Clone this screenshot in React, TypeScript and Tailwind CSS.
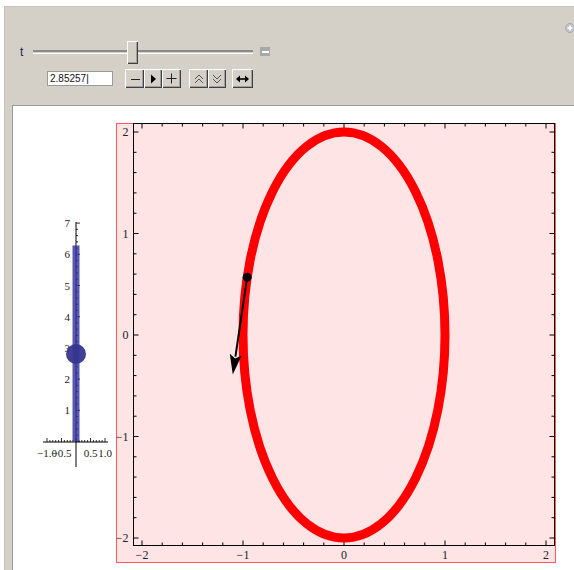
import React from "react";

const T = 2.85257;

// main plot mapping (page pixels)
const X0 = 344;
const XS = 101;
const Y0 = 335;
const YS = 101.5;
const px = (u: number) => X0 + XS * u;
const py = (v: number) => Y0 - YS * v;

// number line mapping
const NY0 = 441.5;
const NYS = 31.2;
const ny = (k: number) => NY0 - NYS * k;

const serif = { fontFamily: "'Liberation Serif', 'Times New Roman', serif" };

function Btn({ w, children }: { w: string; children: React.ReactNode }) {
  return (
    <div
      className={`${w} h-[19px] flex items-center justify-center bg-[#d4d0c8] shadow-[inset_1px_1px_0_#ffffff,inset_-1px_-1px_0_#404040,inset_-2px_-2px_0_#a0a0a0]`}
    >
      {children}
    </div>
  );
}

function Controls() {
  return (
    <div className="relative h-[98px] flex flex-col pt-[33px] pl-[8px]">
      <div className="flex items-center h-[23px]">
        <span
          className="w-[13px] text-[12px] leading-none text-[#1c1c50]"
          style={{ fontFamily: "'Liberation Sans', Arial, sans-serif" }}
        >
          t
        </span>
        <div className="relative w-[220px] h-[4px] bg-[#d4d0c8] border-t-2 border-[#8a8a8a] border-b border-b-white">
          <div className="absolute left-[94px] top-[-11px] w-[11px] h-[23px] bg-[#d4d0c8] shadow-[inset_1px_1px_0_#ffffff,inset_-1px_-1px_0_#404040,inset_-2px_-2px_0_#a0a0a0]" />
        </div>
        <div className="ml-[7px] w-[10px] h-[9px] bg-[#a8a8a8] flex items-center justify-center">
          <div className="w-[7px] h-[2px] bg-white" />
        </div>
      </div>

      <div className="flex items-center h-[19px] mt-[6px]">
        <div
          className="ml-[27px] w-[66px] h-[15px] bg-white border border-[#9a9a9a] flex items-center pl-[2px] text-[10px] leading-none text-[#111]"
          style={{ fontFamily: "'Liberation Sans', Arial, sans-serif" }}
        >
          2.85257|
        </div>
        <div className="ml-[12px] flex">
          <Btn w="w-[19px]">
            <svg width="10" height="10" viewBox="0 0 10 10">
              <line x1="1" y1="5.5" x2="10" y2="5.5" stroke="#222" strokeWidth="1" />
            </svg>
          </Btn>
          <Btn w="w-[18px]">
            <svg width="8" height="10" viewBox="0 0 8 10">
              <polygon points="2,0.5 7,5 2,9.5" fill="#000" />
            </svg>
          </Btn>
          <Btn w="w-[19px]">
            <svg width="11" height="11" viewBox="0 0 11 11">
              <line x1="0.5" y1="5.5" x2="10.5" y2="5.5" stroke="#222" strokeWidth="1" />
              <line x1="5.5" y1="0.5" x2="5.5" y2="10.5" stroke="#222" strokeWidth="1" />
            </svg>
          </Btn>
        </div>
        <div className="ml-[8px] flex">
          <Btn w="w-[19px]">
            <svg width="10" height="10" viewBox="0 0 10 10" fill="none" stroke="#555" strokeWidth="1">
              <polyline points="1,5 5,1 9,5" />
              <polyline points="1,9 5,5 9,9" />
            </svg>
          </Btn>
          <Btn w="w-[18px]">
            <svg width="10" height="10" viewBox="0 0 10 10" fill="none" stroke="#555" strokeWidth="1">
              <polyline points="1,1 5,5 9,1" />
              <polyline points="1,5 5,9 9,5" />
            </svg>
          </Btn>
        </div>
        <div className="ml-[6px] flex">
          <Btn w="w-[21px]">
            <svg width="13" height="8" viewBox="0 0 13 8">
              <line x1="3" y1="4" x2="10" y2="4" stroke="#000" strokeWidth="1.6" />
              <polygon points="0,4 4,0.5 4,7.5" fill="#000" />
              <polygon points="13,4 9,0.5 9,7.5" fill="#000" />
            </svg>
          </Btn>
        </div>
      </div>

      <div className="absolute left-[553px] top-[16px]">
        <svg width="10" height="10" viewBox="0 0 10 10">
          <circle cx="5" cy="5" r="4.5" fill="#c4c4cc" stroke="#a8a8b4" strokeWidth="1" />
          <line x1="2.5" y1="5" x2="7.5" y2="5" stroke="#fff" strokeWidth="1.5" />
          <line x1="5" y1="2.5" x2="5" y2="7.5" stroke="#fff" strokeWidth="1.5" />
        </svg>
      </div>
    </div>
  );
}

function NumberLine() {
  const minor: number[] = [];
  for (let i = 0; i <= 35; i++) minor.push(i * 0.2);
  const hticks: number[] = [];
  for (let i = -10; i <= 10; i++) hticks.push(i / 10);
  const hx = (u: number) => 76 + 29 * u;
  return (
    <svg width="103" height="464" viewBox="13 106 103 464" className="shrink-0" style={serif}>
      {/* vertical axis */}
      <line x1="76" y1="222" x2="76" y2="467" stroke="#000" strokeWidth="1" />
      {minor.map((k) => {
        const major = Math.abs(k - Math.round(k)) < 1e-6;
        return (
          <line
            key={k}
            x1="76"
            y1={ny(k)}
            x2={76 + (major ? 4 : 2)}
            y2={ny(k)}
            stroke="#000"
            strokeWidth="0.8"
          />
        );
      })}
      {[1, 2, 3, 4, 5, 6, 7].map((k) => (
        <text key={k} x="70" y={ny(k)} fontSize="11" textAnchor="end" dominantBaseline="central" fill="#222">
          {k}
        </text>
      ))}
      {/* horizontal axis */}
      <line x1="43" y1="442" x2="108" y2="442" stroke="#000" strokeWidth="1" />
      {hticks.map((u) => {
        const major = Math.abs(u * 2 - Math.round(u * 2)) < 1e-6;
        return (
          <line key={u} x1={hx(u)} y1="442" x2={hx(u)} y2={major ? 438 : 440} stroke="#000" strokeWidth="0.8" />
        );
      })}
      {[
        [-1, "\u22121.0"],
        [-0.5, "\u22120.5"],
        [0.5, "0.5"],
        [1, "1.0"],
      ].map(([u, s]) => (
        <text key={s as string} x={hx(u as number)} y="453" fontSize="11" textAnchor="middle" dominantBaseline="central" fill="#222">
          {s}
        </text>
      ))}
      {/* range bar and current value */}
      <rect x="72.5" y={ny(2 * Math.PI)} width="7" height={ny(0) - ny(2 * Math.PI)} fill="#3434a0" opacity="0.82" />
      <circle cx="76" cy={ny(T) + 1.5} r="10" fill="#36368f" opacity="0.95" />
    </svg>
  );
}

function MainPlot() {
  const ticks: number[] = [];
  for (let i = -10; i <= 10; i++) ticks.push(i / 5);
  const isMajor = (u: number) => Math.abs(u - Math.round(u)) < 1e-6;

  const sx = px(Math.cos(T));
  const sy = py(2 * Math.sin(T));
  const tx = px(Math.cos(T) + -Math.sin(T) / 2);
  const ty = py(2 * Math.sin(T) + Math.cos(T));
  const len = Math.hypot(tx - sx, ty - sy);
  const dx = (tx - sx) / len;
  const dy = (ty - sy) / len;
  const hl = 20;
  const hw = 6;
  const bx = tx - hl * dx;
  const by = ty - hl * dy;
  const nx = -dy;
  const nyv = dx;
  const head = [
    [tx, ty],
    [bx + hw * nx, by + hw * nyv],
    [bx + 4 * dx, by + 4 * dy],
    [bx - hw * nx, by - hw * nyv],
  ]
    .map((p) => p.join(","))
    .join(" ");

  return (
    <svg width="441" height="441" viewBox="116 123 441 441" className="shrink-0 mt-[17px]" style={serif}>
      <rect x="116.5" y="123.5" width="439" height="439" fill="#fee4e4" stroke="#ff5a5a" strokeWidth="1" />
      <rect x="133.5" y="123.5" width="421" height="422" fill="none" stroke="#000" strokeWidth="1" />
      {ticks.map((u) => {
        const l = isMajor(u) ? 5 : 3;
        return (
          <g key={u} stroke="#000" strokeWidth="1">
            <line x1={px(u)} y1="123.5" x2={px(u)} y2={123.5 + l} />
            <line x1={px(u)} y1="545.5" x2={px(u)} y2={545.5 - l} />
            <line x1="133.5" y1={py(u)} x2={133.5 + l} y2={py(u)} />
            <line x1="554.5" y1={py(u)} x2={554.5 - l} y2={py(u)} />
          </g>
        );
      })}
      {[-2, -1, 0, 1, 2].map((u) => (
        <g key={u} fontSize="12" fill="#222">
          <text x={px(u)} y="555" textAnchor="middle" dominantBaseline="central">
            {u < 0 ? `\u2212${-u}` : u}
          </text>
          <text x="128.5" y={py(u)} textAnchor="end" dominantBaseline="central">
            {u < 0 ? `\u2212${-u}` : u}
          </text>
        </g>
      ))}
      <ellipse cx={X0} cy={Y0} rx={XS} ry={2 * YS} fill="none" stroke="#ff0000" strokeWidth="9" />
      <line x1={sx} y1={sy} x2={bx + 2 * dx} y2={by + 2 * dy} stroke="#000" strokeWidth="2" />
      <polygon points={head} fill="#000" />
      <circle cx={sx} cy={sy} r="4.5" fill="#000" />
    </svg>
  );
}

export default function App() {
  return (
    <div className="w-[574px] h-[570px] bg-white pt-[6px] pl-[4px] overflow-hidden">
      <div className="h-full flex flex-col bg-[#d4d0c8] border-t border-l border-[#c6c2ba] pl-[7px]">
        <Controls />
        <div className="flex-1 flex items-start bg-white border-t border-l border-[#9c9a94]">
          <NumberLine />
          <MainPlot />
        </div>
      </div>
    </div>
  );
}
